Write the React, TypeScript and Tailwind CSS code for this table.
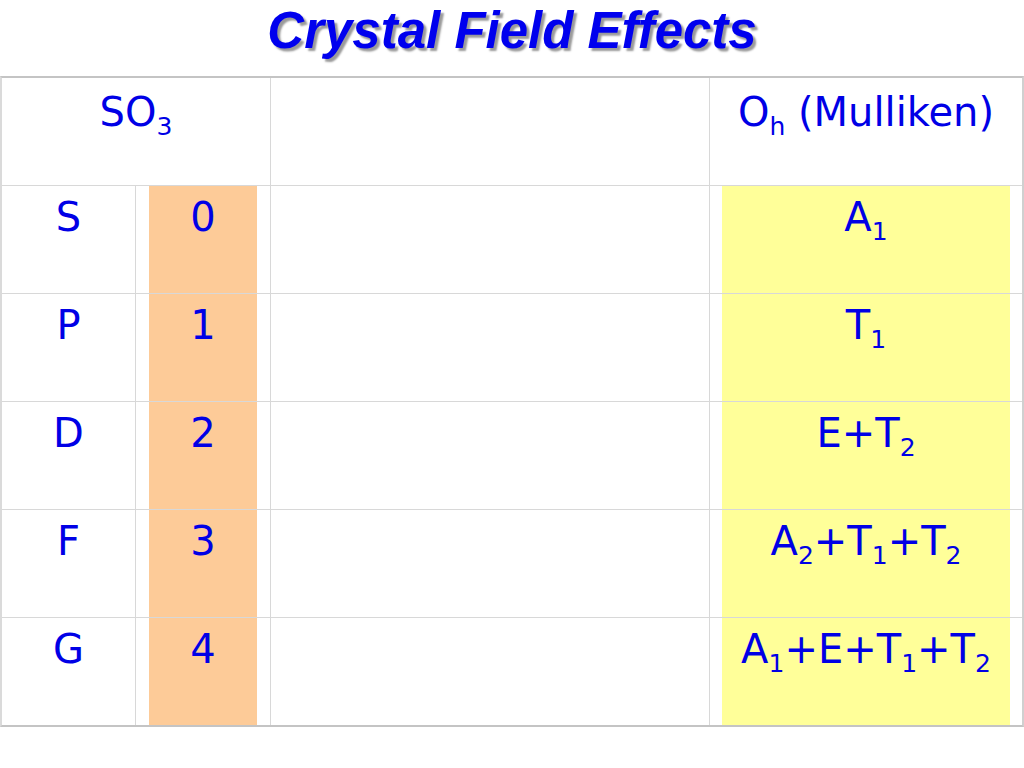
import React from "react";

const Sub = ({ children }: { children: React.ReactNode }) => (
  <span className="text-[25px] leading-none align-[-9px]">{children}</span>
);

const rows: { l: string; n: string; o: React.ReactNode }[] = [
  { l: "S", n: "0", o: <>A<Sub>1</Sub></> },
  { l: "P", n: "1", o: <>T<Sub>1</Sub></> },
  { l: "D", n: "2", o: <>E+T<Sub>2</Sub></> },
  { l: "F", n: "3", o: <>A<Sub>2</Sub>+T<Sub>1</Sub>+T<Sub>2</Sub></> },
  { l: "G", n: "4", o: <>A<Sub>1</Sub>+E+T<Sub>1</Sub>+T<Sub>2</Sub></> },
];

export default function App() {
  return (
    <div className="w-[1024px] h-[768px] bg-white overflow-hidden">
      <div className="h-[76px] flex justify-center pt-[3px]">
        <h1
          className="text-[51px] leading-[56px] h-[56px] font-bold italic text-[#0000ee] [text-shadow:3px_3px_2px_#9a9a9a]"
          style={{ fontFamily: '"Liberation Sans", Arial, sans-serif' }}
        >
          Crystal Field Effects
        </h1>
      </div>
      <div
        className="grid grid-cols-[134px_135px_439px_1fr] border-t-2 border-b-2 border-l-2 border-r-2 border-t-[#c4c4c4] border-b-[#c4c4c4] border-l-[#dadada] border-r-[#d0d0d0] text-[40px] leading-[48px] text-[#0000e6]"
        style={{ fontFamily: '"DejaVu Sans", Verdana, sans-serif' }}
      >
        {/* header */}
        <div className="col-span-2 h-[108px] border-r border-b border-[#d8d8d8] pt-[10px] text-center">
          SO<Sub>3</Sub>
        </div>
        <div className="h-[108px] border-r border-b border-[#d8d8d8]" />
        <div className="h-[108px] border-b border-[#d8d8d8] pt-[10px] text-center">
          O<Sub>h</Sub> (Mulliken)
        </div>
        {rows.map((r, i) => {
          const last = i === rows.length - 1;
          const rowCls = last ? "h-[107px]" : "h-[108px] border-b";
          return (
            <React.Fragment key={r.l}>
              <div className={`${rowCls} border-r border-[#d8d8d8] pt-[7px] text-center`}>{r.l}</div>
              <div className={`${rowCls} border-r border-[#d8d8d8] bg-white`}>
                <div className="h-full ml-[13px] mr-[13px] bg-[#fdcb98] pt-[7px] text-center">{r.n}</div>
              </div>
              <div className={`${rowCls} border-r border-[#d8d8d8]`} />
              <div className={`${rowCls} border-[#d8d8d8]`}>
                <div className="h-full ml-[12px] mr-[12px] bg-[#ffff99] pt-[7px] text-center">{r.o}</div>
              </div>
            </React.Fragment>
          );
        })}
      </div>
    </div>
  );
}
